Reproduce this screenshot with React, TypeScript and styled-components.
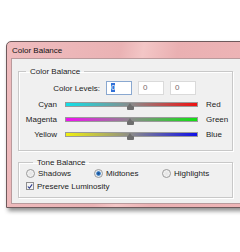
import { createGlobalStyle } from "styled-components"
import styled from "styled-components"

const GlobalStyle = createGlobalStyle`
  html, body {
    margin: 0;
    padding: 0;
    background: #ffffff;
  }
  body {
    font-family: "Liberation Sans", Arial, sans-serif;
    font-size: 8px;
    color: #1c1c1c;
  }
`

type Slider = {
  left: string
  right: string
  from: string
  to: string
}

const sliders: Slider[] = [
  { left: "Cyan", right: "Red", from: "#10e0e8", to: "#f01010" },
  { left: "Magenta", right: "Green", from: "#f010f0", to: "#10e010" },
  { left: "Yellow", right: "Blue", from: "#f0f010", to: "#1010e8" },
]

export default function App() {
  return (
    <>
      <GlobalStyle />
      <Page>
        <Window>
          <TitleBar>Color Balance</TitleBar>
          <Panel>
            <Group>
              <Legend>Color Balance</Legend>
              <LevelsRow>
                <LevelsLabel>Color Levels:</LevelsLabel>
                <LevelBox $focused>
                  <Selected>0</Selected>
                </LevelBox>
                <LevelBox>0</LevelBox>
                <LevelBox>0</LevelBox>
              </LevelsRow>
              {sliders.map(s => (
                <SliderRow key={s.left}>
                  <LeftLabel>{s.left}</LeftLabel>
                  <Track>
                    <Bar $from={s.from} $to={s.to} />
                    <Thumb />
                  </Track>
                  <RightLabel>{s.right}</RightLabel>
                </SliderRow>
              ))}
            </Group>
            <Group $tone>
              <Legend>Tone Balance</Legend>
              <RadioRow>
                <Option>
                  <Radio />
                  Shadows
                </Option>
                <Option>
                  <Radio $checked />
                  Midtones
                </Option>
                <Option>
                  <Radio />
                  Highlights
                </Option>
              </RadioRow>
              <Option>
                <Check>
                  <svg width="7" height="7" viewBox="0 0 7 7">
                    <path d="M1 3.5 L2.8 5.5 L6 1" fill="none" stroke="#2a3a8a" strokeWidth="1.3" />
                  </svg>
                </Check>
                Preserve Luminosity
              </Option>
            </Group>
          </Panel>
        </Window>
      </Page>
    </>
  )
}

const Page = styled.div`
  width: 240px;
  height: 252px;
  overflow: hidden;
  padding: 41px 0 0 6px;
  box-sizing: border-box;
`

const Window = styled.div`
  width: 250px;
  border: 1px solid #6e5a5c;
  border-radius: 5px 5px 0 0;
  background: linear-gradient(100deg, #efbcbe 0%, #eab2b4 40%, #f3c6c6 48%, #eab0b2 60%, #efb6b8 100%);
  box-shadow: 2px 3px 4px rgba(0, 0, 0, 0.45);
  padding: 0 4px 3px 4px;
`

const TitleBar = styled.div`
  height: 15px;
  padding-top: 1px;
  line-height: 15px;
  padding-left: 1px;
  color: #111;
`

const Panel = styled.div`
  background: #f0f0f0;
  border: 1px solid #b99a9c;
  padding: 8px 0 5px 6px;
  display: flex;
  flex-direction: column;
  gap: 7px;
`

const Group = styled.fieldset<{ $tone?: boolean }>`
  margin: 0;
  width: 215px;
  box-sizing: border-box;
  border: 1px solid #c8c8c8;
  box-shadow: inset 1px 1px 0 #ffffff, 1px 1px 0 #ffffff;
  padding: ${p => (p.$tone ? "0 0 5px 7px" : "4px 0 6px 0")};
  display: flex;
  flex-direction: column;
  gap: ${p => (p.$tone ? "1px" : "0")};
`

const Legend = styled.legend`
  margin-left: 7px;
  padding: 0 4px;
  font-size: 8px;
  line-height: 9px;
`

const LevelsRow = styled.div`
  display: flex;
  align-items: center;
  height: 16px;
  margin-bottom: 3px;
`

const LevelsLabel = styled.span`
  width: 81px;
  text-align: right;
  margin-right: 6px;
`

const LevelBox = styled.div<{ $focused?: boolean }>`
  width: 26px;
  height: 14px;
  box-sizing: border-box;
  margin-right: 6px;
  background: #ffffff;
  border: 1px solid ${p => (p.$focused ? "#8aa8d0" : "#dadada")};
  padding-left: 4px;
  line-height: 12px;
  color: #7a6a6a;
`

const Selected = styled.span`
  background: #3070d8;
  color: #ffffff;
`

const SliderRow = styled.div`
  display: flex;
  align-items: flex-start;
  height: 15px;
`

const LeftLabel = styled.span`
  width: 38px;
  text-align: right;
  line-height: 12px;
`

const Track = styled.div`
  position: relative;
  width: 133px;
  height: 15px;
  margin: 0 8px 0 8px;
`

const Bar = styled.div<{ $from: string; $to: string }>`
  margin-top: 3px;
  height: 3px;
  border: 1px solid #9a9a9a;
  background: linear-gradient(90deg, ${p => p.$from}, #8a8a8a 50%, ${p => p.$to});
`

const Thumb = styled.div`
  position: absolute;
  left: 62px;
  top: 7px;
  width: 7px;
  height: 4px;
  background: #6e6e6e;
  border-radius: 1px;
  &::before {
    content: "";
    position: absolute;
    left: 1px;
    top: -3px;
    border-left: 2.5px solid transparent;
    border-right: 2.5px solid transparent;
    border-bottom: 3px solid #6e6e6e;
  }
`

const RightLabel = styled.span`
  line-height: 12px;
`

const RadioRow = styled.div`
  display: flex;
  align-items: center;
  height: 12px;
`

const Option = styled.label`
  display: flex;
  align-items: center;
  gap: 3px;
  width: 68px;
  white-space: nowrap;
  height: 12px;
`

const Radio = styled.span<{ $checked?: boolean }>`
  width: 7px;
  height: 7px;
  border-radius: 50%;
  border: 1px solid #9a9a9a;
  background: ${p =>
    p.$checked
      ? "radial-gradient(circle, #1a4a8a 0, #2b74c0 1.8px, #dfe7ef 2.6px, #ffffff 100%)"
      : "radial-gradient(circle, #e4e4e4 0, #f8f8f8 100%)"};
  flex: none;
`

const Check = styled.span`
  width: 8px;
  height: 8px;
  box-sizing: border-box;
  border: 1px solid #8e8e8e;
  background: #f4f4f4;
  display: flex;
  align-items: center;
  justify-content: center;
  flex: none;
`
